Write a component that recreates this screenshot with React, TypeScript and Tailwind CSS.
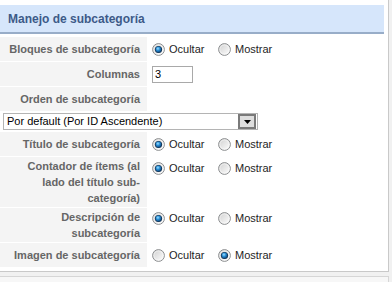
import React, { useId } from "react";

function Radio({ checked }: { checked?: boolean }) {
  const id = useId().replace(/:/g, "");
  return (
    <svg width="13" height="13" viewBox="0 0 13 13" className="shrink-0 block">
      <defs>
        <linearGradient id={`o${id}`} x1="0" y1="0" x2="1" y2="1">
          <stop offset="0" stopColor="#cfcfcf" />
          <stop offset="1" stopColor="#ffffff" />
        </linearGradient>
        <radialGradient id={`i${id}`} cx="0.4" cy="0.35" r="0.7">
          <stop offset="0" stopColor="#9fe0ff" />
          <stop offset="0.45" stopColor="#2a8fd6" />
          <stop offset="1" stopColor="#0b3f73" />
        </radialGradient>
      </defs>
      <circle cx="6.5" cy="6.5" r="5.9" fill={`url(#o${id})`} stroke="#8c8e90" strokeWidth="1" />
      <circle cx="6.5" cy="6.5" r="4.6" fill="none" stroke="#ffffff" strokeOpacity="0.6" strokeWidth="0.8" />
      {checked && (
        <>
          <circle cx="6.5" cy="6.5" r="3.6" fill="#14314f" />
          <circle cx="6.5" cy="6.5" r="2.9" fill={`url(#i${id})`} />
        </>
      )}
    </svg>
  );
}

function Choice({ value }: { value: "o" | "m" }) {
  return (
    <div className="flex items-center h-[16px] text-[11px] leading-[16px] text-[#1e1e1e]">
      <Radio checked={value === "o"} />
      <span className="ml-[4px] w-[49px]">Ocultar</span>
      <Radio checked={value === "m"} />
      <span className="ml-[4px]">Mostrar</span>
    </div>
  );
}

function Label({ children, h }: { children: React.ReactNode; h?: string }) {
  return (
    <div
      className={`bg-[#f4f4f4] flex items-center justify-end text-right pr-[7px] pl-[4px] py-[1px] font-bold text-[11px] leading-[16px] text-[#666666] ${h ?? "h-[24px]"}`}
    >
      <div>{children}</div>
    </div>
  );
}

export default function App() {
  return (
    <div
      className="w-[392px] h-[282px] bg-[#f1f1f1] overflow-hidden"
      style={{ fontFamily: '"Liberation Sans", Arial, sans-serif' }}
    >
      <div className="w-[389px] bg-white border-r border-b border-[#c9c9c9] pt-[5px] pr-[4px] pb-[4px]">
        <div className="h-[29px] bg-[#d6e6fb] border-b-2 border-[#98adc8] flex items-center pl-[8px]">
          <span className="text-[12px] font-bold text-[#3d5a88]">Manejo de subcategoría</span>
        </div>
        <div className="mt-[3px] grid grid-cols-[147px_1fr] gap-y-[1px]">
          <Label>Bloques de subcategoría</Label>
          <div className="flex items-center pl-[5px]">
            <Choice value="o" />
          </div>

          <Label>Columnas</Label>
          <div className="flex items-center pl-[5px]">
            <div className="w-[41px] h-[17px] border border-[#a9a9a9] bg-white text-[11px] leading-[15px] pl-[2px] text-black">
              3
            </div>
          </div>

          <Label>Orden de subcategoría</Label>
          <div />

          <div className="col-span-2 h-[19px] flex items-center pl-[3px]">
            <div className="relative w-[255px] h-[17px] border border-[#b4b4b4] bg-white text-[11px] leading-[15px] pl-[3px] text-black">
              Por default (Por ID Ascendente)
              <div className="absolute right-[1px] top-[0px] w-[18px] h-[15px] border-2 border-[#7a7a7a] bg-[#dedede] flex items-center justify-center">
                <svg width="7" height="4" viewBox="0 0 7 4">
                  <path d="M0 0 H7 L3.5 4 Z" fill="#000" />
                </svg>
              </div>
            </div>
          </div>

          <Label>Título de subcategoría</Label>
          <div className="flex items-center pl-[5px]">
            <Choice value="o" />
          </div>

          <Label h="h-[50px]">
            Contador de ítems (al
            <br />
            lado del título sub-
            <br />
            categoría)
          </Label>
          <div className="flex items-start pl-[5px] pt-[3px]">
            <Choice value="o" />
          </div>

          <Label h="h-[34px]">
            Descripción de
            <br />
            subcategoría
          </Label>
          <div className="flex items-start pl-[5px] pt-[2px]">
            <Choice value="o" />
          </div>

          <Label>Imagen de subcategoría</Label>
          <div className="flex items-center pl-[5px]">
            <Choice value="m" />
          </div>
        </div>
      </div>
      <div className="mt-[4px] w-[389px] h-[10px] border-t border-r border-[#d6d6d6] bg-[#f7f7f7]" />
    </div>
  );
}
